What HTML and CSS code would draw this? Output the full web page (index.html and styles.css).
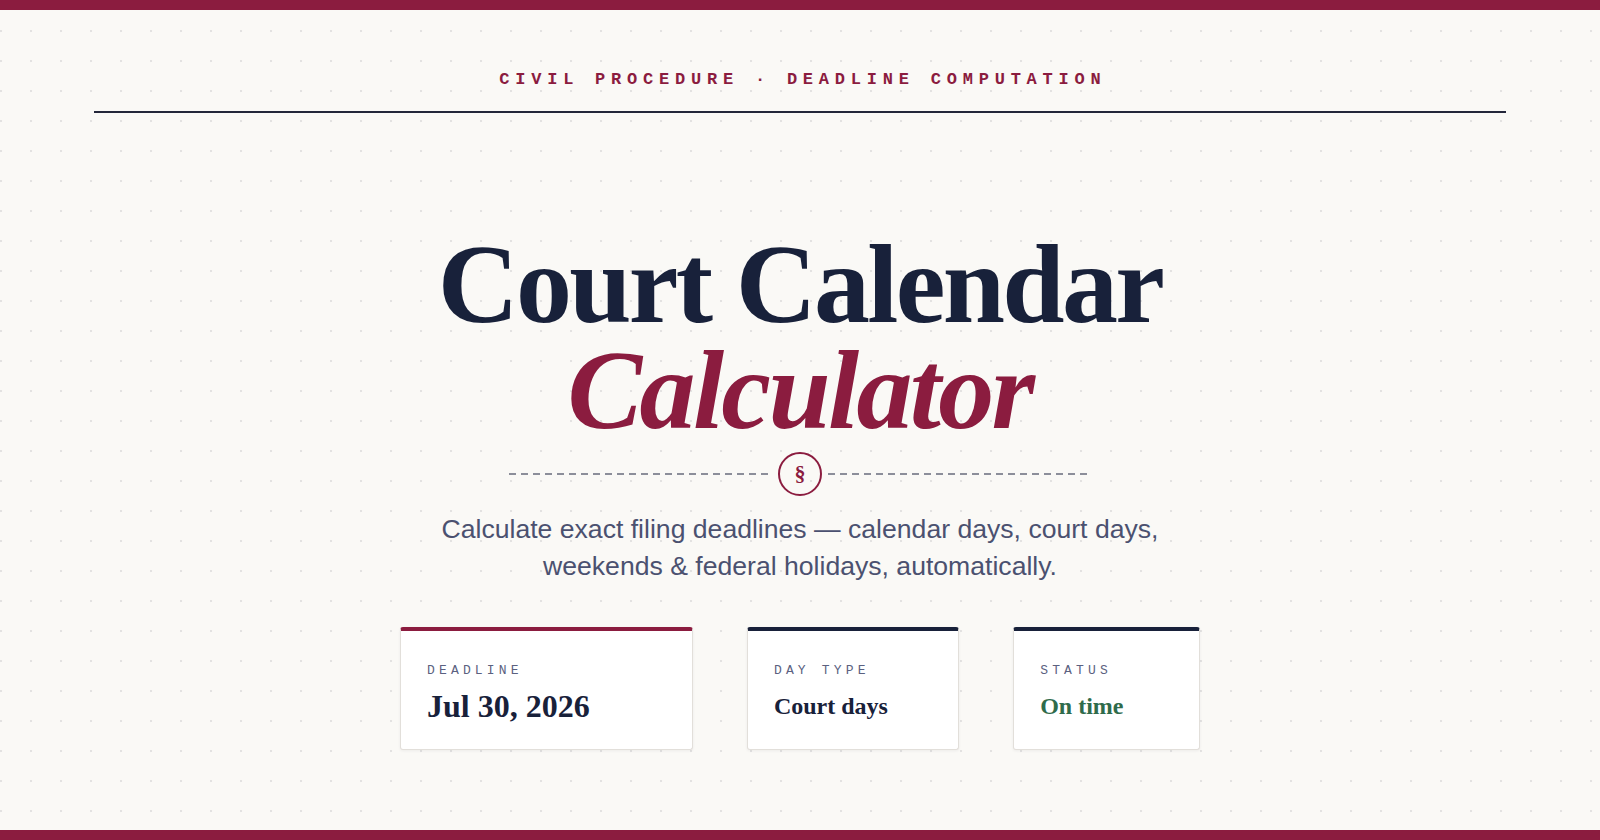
FILE: index.html
```html
<!DOCTYPE html>
<html lang="en">
<head>
    <meta charset="UTF-8">
    <meta name="viewport" content="width=device-width, initial-scale=1.0">
    <title>Court Calendar Calculator</title>
    <link rel="stylesheet" href="styles.css">
</head>
<body>
    <header class="masthead">
        <div class="eyebrow">Civil Procedure · Deadline Computation</div>
    </header>

    <main class="hero">
        <h1 class="title">
            Court Calendar
            <span class="title-accent">Calculator</span>
        </h1>

        <div class="divider"><span class="seal">§</span></div>

        <p class="lede">Calculate exact filing deadlines — calendar days, court days, weekends &amp; federal holidays, automatically.</p>

        <div class="stats">
            <div class="stat stat-primary">
                <div class="stat-label">Deadline</div>
                <div class="stat-value">Jul 30, 2026</div>
            </div>
            <div class="stat">
                <div class="stat-label">Day Type</div>
                <div class="stat-value">Court days</div>
            </div>
            <div class="stat">
                <div class="stat-label">Status</div>
                <div class="stat-value ok">On time</div>
            </div>
        </div>
    </main>
</body>
</html>
```

FILE: styles.css
```css
html {
    background-color: #faf9f6;
    background-image: radial-gradient(circle at 1px 1px, rgba(60, 60, 80, 0.12) 1px, transparent 1.6px);
    background-size: 30px 30px;
}
body {
    margin: 0;
    min-height: 100vh;
    box-sizing: border-box;
    border-top: 10px solid #8b1c3f;
    border-bottom: 10px solid #8b1c3f;
    color: #18213a;
    font-family: "Liberation Sans", Arial, sans-serif;
}
.masthead {
    max-width: 1412px;
    margin: 0 auto;
    padding: 60px 0 21px;
    border-bottom: 2px solid #23273a;
    text-align: center;
}
.eyebrow {
    font-family: "Liberation Mono", "Courier New", monospace;
    font-weight: bold;
    font-size: 17px;
    line-height: 20px;
    letter-spacing: 0.34em;
    padding-left: 0.34em;
    text-transform: uppercase;
    color: #8b1c3f;
}
.hero {
    padding-top: 118px;
    text-align: center;
}
.title {
    margin: 0;
    font-family: "Liberation Serif", "Times New Roman", serif;
    font-weight: 700;
    font-size: 112px;
    line-height: 0.95;
    letter-spacing: -0.024em;
    color: #18213a;
}
.title-accent {
    display: block;
    font-style: italic;
    color: #8b1c3f;
}
.divider {
    display: flex;
    align-items: center;
    gap: 6px;
    width: 582px;
    margin: 8px auto 0;
}
.divider::before, .divider::after {
    content: "";
    flex: 1;
    height: 2px;
    background: repeating-linear-gradient(90deg, #8c8e9a 0 7px, transparent 7px 12px);
}
.seal {
    width: 40px;
    height: 40px;
    border: 2px solid #8b1c3f;
    border-radius: 50%;
    display: flex;
    align-items: center;
    justify-content: center;
    font-family: "Liberation Serif", "Times New Roman", serif;
    font-weight: bold;
    font-size: 22px;
    color: #8b1c3f;
}
.lede {
    max-width: 750px;
    margin: 15px auto 0;
    font-size: 26.6px;
    line-height: 1.41;
    color: #4b5170;
}
.stats {
    display: grid;
    grid-template-columns: 1.38fr 1fr 0.88fr;
    gap: 54px;
    width: 800px;
    margin: 41px auto 0;
    text-align: left;
}
.stat {
    background: #fff;
    border: 1px solid #e2dfda;
    border-top: 4px solid #18213a;
    border-radius: 3px;
    box-shadow: 0 1px 3px rgba(30, 30, 50, 0.06);
    padding: 32px 26px 23px;
}
.stat-primary {
    border-top-color: #8b1c3f;
}
.stat-label {
    font-family: "Liberation Mono", "Courier New", monospace;
    font-size: 13px;
    line-height: 16px;
    letter-spacing: 0.32em;
    text-transform: uppercase;
    color: #5b6180;
}
.stat-value {
    margin-top: 7px;
    font-family: "Liberation Serif", "Times New Roman", serif;
    font-weight: bold;
    font-size: 24px;
    line-height: 40px;
    color: #18213a;
}
.stat-primary .stat-value {
    font-size: 32px;
}
.stat-value.ok {
    color: #2f6b4b;
}
```
